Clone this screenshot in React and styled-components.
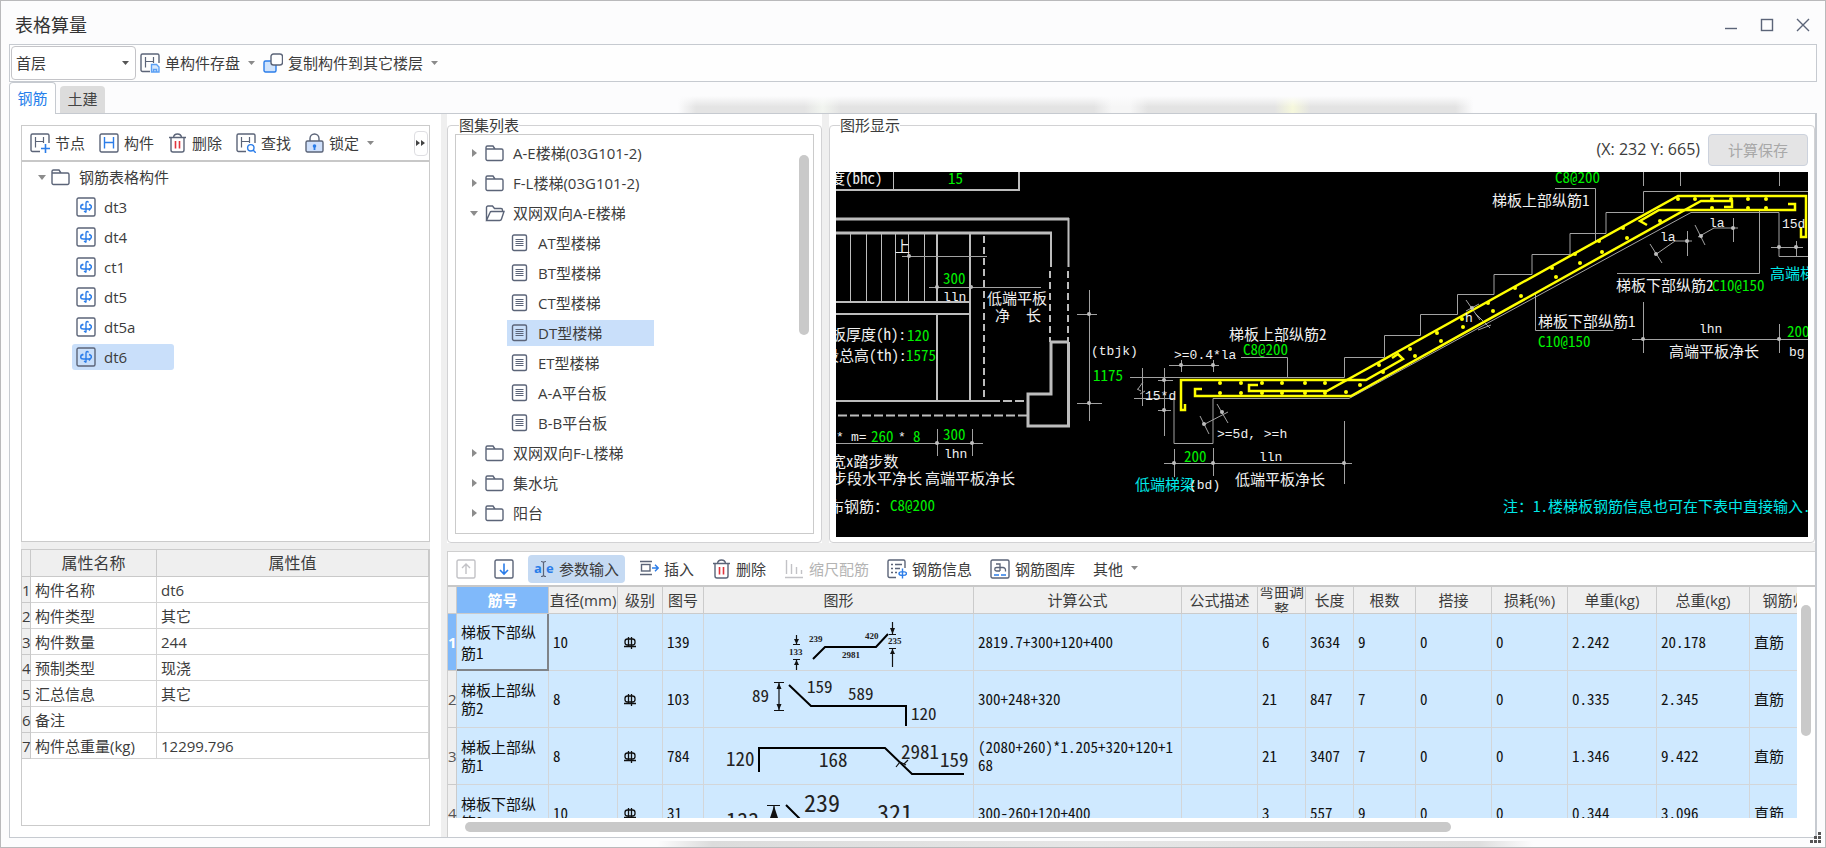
import React, { useState } from 'react'
import styled, { createGlobalStyle, css } from 'styled-components';

const GlobalStyle = createGlobalStyle`
    *{
        box-sizing:border-box;
    }
    body{
        margin:0;
        color:#3c3c3c;
        font:15px/20px "Open Sans","Noto Sans CJK SC",sans-serif;
    }
    button,select{
        font:inherit;
        color:inherit;
        background:none;
        border:0;
        padding:0;
        margin:0;
    }
`;

const Window = styled.div`
    position:relative;
    display:flex;
    flex-direction:column;
    height:100vh;
    min-height:640px;
    padding:0 8px 9px;
    border:1px solid #b9b9bb;
    overflow:hidden;
    background:
        linear-gradient(90deg, transparent 36%, #dcdcdc 39%, #e6e6e6 60%, #dedede 81%, transparent 84%) bottom / 100% 6px no-repeat,
        #fcfcfd;
`;

const TitleBar = styled.header`
    display:flex;
    align-items:center;
    justify-content:space-between;
    flex:0 0 43px;
    padding:4px 6px 0;
    h1{
        margin:0;
        font-size:18px;
        font-weight:400;
        color:#333;
    }
`;

const WindowButtons = styled.div`
    display:flex;
    gap:20px;
    button{
        display:flex;
    }
`;

const TopBar = styled.div`
    display:flex;
    align-items:center;
    flex:0 0 38px;
    padding:0 1px;
    background:#fefefe;
    border:1px solid #c6cad0;
`;

const FloorBox = styled.label`
    display:flex;
    align-items:center;
    width:125px;
    height:34px;
    padding:0 6px 0 4px;
    background:white;
    border:1px solid #c4c4c8;
    border-radius:4px;
    select{
        flex:1;
        appearance:none;
        outline:none;
    }
`;

const ToolButton = styled.button`
    display:flex;
    align-items:center;
    gap:5px;
    height:28px;
    padding:0 4px;
    white-space:nowrap;
    ${({ $active }) => $active && css`
        padding:0 6px;
        background:#c5daf3;
        border-radius:4px;
    `}
    &:disabled{
        color:#b4b4b4;
    }
    .caret{
        margin-left:3px;
    }
`;

const TabBar = styled.div`
    display:flex;
    align-items:flex-end;
    gap:4px;
    flex:0 0 31px;
    background:
        linear-gradient(#fcfcfd, #fcfcfd 45%, transparent 80%),
        linear-gradient(90deg,
            transparent 37%, #e4e4e4 38%, #e4e4e4 44%, #f2f5f0 45%, #e3e3e3 46%, #e3e3e3 60%,
            #f6f6f6 61%, #f6f6f6 62%, #e3e3e3 63%, #e3e3e3 70%, #f6f8dc 71%, #e3e3e3 72%, #e3e3e3 80%, transparent 81%
        );
`;

const Tab = styled.button`
    width:${({ $active }) => $active ? '47px' : '45px'};
    height:${({ $active }) => $active ? '32px' : '27px'};
    margin-bottom:${({ $active }) => $active ? '-1px' : '0'};
    padding-bottom:2px;
    background:${({ $active }) => $active ? 'white' : '#dcdcdc'};
    color:${({ $active }) => $active ? '#2680eb' : '#444'};
    border:${({ $active }) => $active ? '1px solid #c6cad0' : '0'};
    border-bottom:0;
    border-radius:4px 4px 0 0;
    z-index:1;
`;

const Body = styled.main`
    display:flex;
    gap:6px;
    flex:1;
    min-height:0;
    background:#efefef;
    border:1px solid #c6cad0;
    border-right-width:2px;
`;

const Side = styled.section`
    display:flex;
    flex-direction:column;
    flex:0 0 431px;
    padding:11px;
    background:white;
`;

const TreePanel = styled.div`
    flex:1;
    min-height:0;
    overflow:hidden;
    border:1px solid #cbcbcb;
`;

const SideTools = styled.div`
    display:flex;
    align-items:center;
    gap:6px;
    height:36px;
    padding:0 1px 0 4px;
    border-bottom:2px solid #c8c8c8;
    button:last-child{
        margin-left:auto;
    }
`;

const MoreButton = styled.button`
    display:flex;
    align-items:center;
    justify-content:center;
    width:14px;
    height:25px;
    border:1px solid #dedee2;
    border-radius:4px;
`;

const Tree = styled.ul`
    flex:1;
    margin:0;
    padding:0;
    list-style:none;
`;

const TreeRow = styled.li`
    display:flex;
    align-items:center;
    gap:${({ $gap }) => $gap || 0}px;
    height:30px;
    padding-left:${({ $indent }) => $indent}px;
`;

const TreeItem = styled.button`
    display:flex;
    align-items:center;
    gap:${({ $gap }) => $gap || 9}px;
    height:26px;
    padding:0 4px;
    text-align:left;
    white-space:nowrap;
    width:${({ $width }) => $width ? $width + 'px' : 'auto'};
    border-radius:${({ $round }) => $round ? '3px' : '0'};
    background:${({ $selected }) => $selected ? '#c9dffa' : 'none'};
`;

const PropPanel = styled.div`
    flex:0 0 277px;
    border:1px solid #cbcbcb;
`;

const Divider = styled.div`
    flex:0 0 7px;
    background:#efefef;
`;

const PropTable = styled.table`
    width:100%;
    border-spacing:0;
    table-layout:fixed;
    th,td{
        height:26px;
        padding:0 0 0 4px;
        text-align:left;
        font-weight:400;
        white-space:nowrap;
        border-right:1px solid #d4d4d4;
        border-bottom:1px solid #d4d4d4;
    }
    thead th{
        height:27px;
        padding:0;
        font-size:16px;
        text-align:center;
        background:#efefef;
        border-color:#c9c9c9;
    }
    tbody th{
        padding:0;
        background:#efefef;
        border-color:#c9c9c9;
    }
`;

const Work = styled.section`
    display:flex;
    flex-direction:column;
    gap:8px;
    flex:1;
    min-width:0;
`;

const Upper = styled.div`
    display:flex;
    gap:7px;
    flex:1;
    min-height:0;
`;

const GroupPane = styled.div`
    display:flex;
    flex:${({ $width }) => $width ? '0 0 ' + $width + 'px' : '1'};
    min-width:0;
    background:white;
`;

const Group = styled.fieldset`
    display:flex;
    flex-direction:column;
    flex:1;
    min-width:0;
    margin:2px 0 0;
    padding:${({ $pad }) => $pad};
    border:1px solid #d2d2d4;
    border-radius:4px;
    legend{
        margin-left:4px;
        padding:0;
        line-height:18px;
    }
`;

const ListBox = styled.div`
    display:flex;
    flex:1;
    min-height:0;
    overflow:hidden;
    padding:3px 4px 0 0;
    border:1px solid #cbcbcb;
`;

const Thumb = styled.div`
    flex:none;
    background:#c9c9c9;
    border-radius:5px;
    width:${({ $w }) => $w};
    height:${({ $h }) => $h};
    margin:${({ $m }) => $m};
`;

const ViewHead = styled.div`
    display:flex;
    align-items:flex-start;
    justify-content:flex-end;
    gap:8px;
    flex:0 0 38px;
    font-size:16px;
    line-height:30px;
`;

const SaveButton = styled.button`
    width:100px;
    height:32px;
    font-size:15px;
    color:#a8a8a8;
    background:#e4e4e5;
    border:1px solid #ccd2dd;
    border-radius:4px;
`;

const Canvas = styled.svg`
    display:block;
    flex:1;
    width:100%;
    min-height:0;
    background:black;
    font-family:"Noto Sans CJK SC",sans-serif;
    font-size:15px;
    font-feature-settings:"hwid";
    .mono{
        font-family:"Liberation Mono",monospace;
        font-size:13px;
    }
`;

const Lower = styled.div`
    display:flex;
    flex-direction:column;
    flex:0 0 286px;
    min-height:0;
    overflow:hidden;
    background:white;
    border:1px solid #cfcfcf;
    border-width:1px 0 0 1px;
`;

const GridTools = styled.div`
    display:flex;
    align-items:center;
    gap:10px;
    flex:0 0 35px;
    padding-left:4px;
    border-bottom:2px solid #c8c8c8;
`;

const GridBody = styled.div`
    display:flex;
    flex:1;
    min-height:0;
`;

const GridView = styled.div`
    flex:1;
    min-width:0;
    overflow:hidden;
`;

const RebarTable = styled.table`
    width:1388px;
    border-spacing:0;
    table-layout:fixed;
    color:#111;
    thead th{
        height:26px;
        padding:0;
        font-weight:400;
        color:#3c3c3c;
        background:#efefef;
        border-right:1px solid #cbcbcb;
        border-bottom:1px solid #cbcbcb;
    }
    thead th.current{
        color:white;
        font-weight:700;
        background:#80b9fa;
    }
    tbody th{
        padding:0;
        font-weight:400;
        color:#555;
        background:#efefef;
        border-right:1px solid #cbcbcb;
        border-bottom:1px solid #cbcbcb;
    }
    tbody th.current{
        color:white;
        font-weight:700;
        background:#80b9fa;
    }
    td{
        height:57px;
        padding:0 4px;
        line-height:18px;
        word-break:break-all;
        font-family:"Noto Sans CJK SC",sans-serif;
        font-feature-settings:"hwid";
        background:#cfe9ff;
        border-right:1px solid #d3d6d9;
        border-bottom:1px solid #d3d6d9;
    }
    td.shape{
        padding:0;
    }
    td.focus{
        line-height:21px;
        border-right:2px solid #808489;
        border-bottom:2px solid #808489;
    }
    svg{
        display:block;
    }
`;

const HeadText = styled.div`
    display:flex;
    align-items:center;
    justify-content:center;
    height:26px;
    overflow:hidden;
    line-height:18px;
    text-align:center;
    white-space:${({ $wrap }) => $wrap ? 'normal' : 'nowrap'};
`;

const ScrollRow = styled.div`
    flex:0 0 19px;
    padding:4px 0 0 17px;
`;

const Grip = styled.svg`
    position:absolute;
    right:3px;
    bottom:3px;
`;

const INK = '#5b6478';
const BLUE = '#2b7de9';

const Icon = ({ children, w = 20, h = 20 }) => (
    <svg width={w} height={h} viewBox={`0 0 ${w} ${h}`} fill="none" stroke={INK} strokeWidth="1.4" aria-hidden="true">
        {children}
    </svg>
)

const Caret = ({ color = '#8a8a8a' }) => (
    <svg className="caret" width="7" height="5" viewBox="0 0 7 5" aria-hidden="true"><path d="M0 0h7L3.500 4z" fill={color} /></svg>
)

const HFrame = 'M10 18.5H2.5a1.5 1.5 0 0 1-1.5-1.5V2.5A1.5 1.5 0 0 1 2.5 1h15A1.5 1.5 0 0 1 19 2.5V10';
const HMark = 'M5.5 4v10.5M5.5 8.5h8M13.5 4v6';

const icons = {
    save: <Icon><path d={HFrame} /><path d={HMark} strokeWidth="1.2" /><path d="M11.5 11.5h5l2.5 2.5v5h-7.5z" stroke="#5ba0f5" fill="#d6e8fd" /><path d="M13.5 19v-2.500h3V19" stroke="#5ba0f5" /></Icon>,
    copy: <Icon><rect x="1" y="8" width="12" height="11" rx="1.500" fill="#cfe3fc" stroke={BLUE} /><rect x="8" y="1" width="11.500" height="11" rx="2.500" fill="#fff" /></Icon>,
    node: <Icon><path d={HFrame} /><path d={HMark} strokeWidth="1.2" /><path d="M15.500 11v9M11 15.500h9" stroke={BLUE} strokeWidth="1.6" /></Icon>,
    part: <Icon><rect x="1" y="1" width="18" height="18" rx="1.500" /><path d="M5.500 4v11.500M14.500 4v11.500M5.500 9.500h9" stroke={BLUE} /></Icon>,
    find: <Icon><path d={HFrame} /><path d={HMark} strokeWidth="1.2" /><circle cx="14.800" cy="14.800" r="3.200" stroke={BLUE} /><path d="M17 17l2.800 2.800" stroke={BLUE} /></Icon>,
    trash: <Icon w={19}><path d="M1 4.500h17M5.500 4.500C5.800 2 7 1 9.500 1s3.700 1 4 3.500M3 4.500V17a2 2 0 0 0 2 2h9a2 2 0 0 0 2-2V4.500" /><path d="M7.500 8v7.500M11.500 8v7.500" stroke="#e0343c" strokeWidth="1.600" /></Icon>,
    lock: <Icon w={19}><path d="M5 8V5.500a4.500 4.500 0 0 1 9 0V8" /><rect x="1" y="8" width="17" height="11" rx="1.500" fill="#cfe0fb" /><path d="M9.500 14v3" stroke={BLUE} strokeWidth="1.800" /><circle cx="9.500" cy="13" r="1.800" fill={BLUE} stroke="none" /></Icon>,
    up: <Icon><g stroke="#c2c2c6"><rect x="1" y="1" width="18" height="18" rx="1.500" /><path d="M10 15V5.500M6 9l4-4 4 4" /></g></Icon>,
    down: <Icon><rect x="1" y="1" width="18" height="18" rx="1.500" /><path d="M10 4.500V14M6 11l4 4 4-4" stroke={BLUE} strokeWidth="1.600" /></Icon>,
    insert: <Icon><path d="M1 2.500h12M1 15.500h12" strokeWidth="1.600" /><rect x="2.500" y="5.500" width="8.500" height="6.500" /><path d="M13 9h6M16 5.800L19.200 9 16 12.200" stroke={BLUE} /></Icon>,
    scale: <Icon><g stroke="#c2c2c6"><path d="M2.500 1v14M7.500 5v10M12.500 8v7M17.500 11v4M1 18.500h18" /></g></Icon>,
    info: <Icon><path d="M9 18.500H2.500A1.500 1.500 0 0 1 1 17V2.500A1.500 1.500 0 0 1 2.500 1h14A1.500 1.500 0 0 1 18 2.500V9M4 5.500h2M8 5.500h7M4 9.500h2M8 9.500h5M4 13.500h2M8 13.500h2" /><path d="M15.500 9.500v10M12 14.500c0-2.500 7.500-2.500 7.500 0s-7.500 2.500-7.500 0z" stroke={BLUE} /></Icon>,
    library: <Icon><rect x="1" y="1" width="18" height="18" rx="1.500" /><path d="M6 5h4v7M10 8.500H6.500a1.700 1.700 0 0 0 0 3.500H10M10 8.500h3a2.500 2.500 0 0 1 2.500 2.500v1.500" strokeWidth="1.300" /><path d="M4 16h5M11 16h5" stroke={BLUE} strokeWidth="1.600" /></Icon>,
    comp: <Icon><rect x="1" y="1" width="18" height="18" rx="1.500" /><path d="M12.500 5.500c-.5-1.500-2.500-1.500-2.500.5v9.500M8 14l2 1.500M7.500 7.500C3.500 8.500 4 12 7.500 12h5c3.500 0 4-3.500.5-4.500M4.500 8.500L7 7M13 13.500l1.500-2" stroke={BLUE} /></Icon>,
    folder: <Icon w={19} h={17}><path d="M1 14V2.500A1.500 1.500 0 0 1 2.500 1H8l2 3h6.500A1.500 1.500 0 0 1 18 5.500V14a1.500 1.500 0 0 1-1.500 1.500h-14A1.500 1.500 0 0 1 1 14zM1 4h9" /></Icon>,
    open: <Icon w={20} h={17}><path d="M1.500 15V2.500A1.500 1.500 0 0 1 3 1h4.500l2 2.500H16A1.500 1.500 0 0 1 17.500 5v1.500M1.500 15.500L5 7.500A1.500 1.500 0 0 1 6.500 6.500H19L16.500 14a2 2 0 0 1-2 1.500z" /></Icon>,
    doc: <Icon w={17} h={18}><rect x="1.500" y="1" width="14" height="15.500" rx="1.500" /><path d="M4.500 5.500h8M4.500 7.500h8M4.500 9.500h8M4.500 11.500h8" strokeWidth="1" /></Icon>,
};

const ParamIcon = () => (
    <svg width="20" height="20" viewBox="0 0 20 20" aria-hidden="true">
        <text x="0" y="14" fontSize="13" fontWeight="700" fill={BLUE} fontFamily="Open Sans">a</text>
        <text x="12" y="14" fontSize="13" fontWeight="700" fill={BLUE} fontFamily="Open Sans">e</text>
        <path d="M7 2.500c1.500 0 2.500.5 2.500 1.500 0-1 1-1.500 2.500-1.500M9.500 4v12M7 17.500c1.500 0 2.500-.5 2.500-1.500 0 1 1 1.500 2.500 1.500" fill="none" stroke={INK} strokeWidth="1.200" />
    </svg>
)

const Arrow = ({ open }) => (
    <svg width="10" height="10" viewBox="0 0 10 10" aria-hidden="true">
        <path d={open ? 'M1 3h8L5 8z' : 'M3 1l5 4-5 4z'} fill="#8c8c8c" />
    </svg>
)

const components = ['dt3', 'dt4', 'ct1', 'dt5', 'dt5a', 'dt6'];

const atlas = [
    { name: 'A-E楼梯(03G101-2)' },
    { name: 'F-L楼梯(03G101-2)' },
    { name: '双网双向A-E楼梯', items: ['AT型楼梯', 'BT型楼梯', 'CT型楼梯', 'DT型楼梯', 'ET型楼梯', 'A-A平台板', 'B-B平台板'] },
    { name: '双网双向F-L楼梯' },
    { name: '集水坑' },
    { name: '阳台' },
];

const props = [
    ['构件名称', 'dt6'],
    ['构件类型', '其它'],
    ['构件数量', '244'],
    ['预制类型', '现浇'],
    ['汇总信息', '其它'],
    ['备注', ''],
    ['构件总重量(kg)', '12299.796'],
];

const columns = [
    ['筋号', 92], ['直径(mm)', 69], ['级别', 45], ['图号', 41], ['图形', 270], ['计算公式', 208], ['公式描述', 76],
    ['弯曲调整', 48], ['长度', 48], ['根数', 62], ['搭接', 76], ['损耗(%)', 76], ['单重(kg)', 89], ['总重(kg)', 93], ['钢筋归类', 86],
];

const Num = ({ x, y, size = 17, children }) => (
    <text x={x} y={y} fontSize={size} fill="#222">{children}</text>
)

const Tiny = ({ x, y, children }) => (
    <text x={x} y={y} fontSize="9" fontWeight="700" fontFamily="Liberation Serif" fill="#222">{children}</text>
)

const shapes = [
    <>
        <path d="M109 45l12-12h51l12-13" className="bar" />
        <path d="M92.500 21v9M89 30.500h7M89 45.500h7M92.500 46v10M188.500 8v12M185 20.500h7M185 34.500h7M188.500 35v18" className="dim" />
        <path d="M90 25h5l-2.500 5zM90 51h5l-2.500-5zM186 14h5l-2.500 6zM186 40h5l-2.500-5z" />
        <Tiny x={85} y={41}>133</Tiny>
        <Tiny x={105} y={28}>239</Tiny>
        <Tiny x={138} y={44}>2981</Tiny>
        <Tiny x={161} y={25}>420</Tiny>
        <Tiny x={184} y={30}>235</Tiny>
    </>,
    <>
        <path d="M85 14l22 21h95v20" className="bar" />
        <path d="M70 11.500h10M70 39.500h10M75 12v27" className="dim" />
        <path d="M72.500 18h5L75 12zM72.500 33h5L75 39z" />
        <Num x={48} y={31}>89</Num>
        <Num x={103} y={22}>159</Num>
        <Num x={144} y={29}>589</Num>
        <Num x={207} y={49}>120</Num>
    </>,
    <>
        <path d="M55 44V20h126l27 26h52" className="bar" />
        <path d="M192 39l4-5M196 34l6 3M200 36l4-4" className="dim" />
        <Num x={22} y={38} size={19}>120</Num>
        <Num x={115} y={39} size={19}>168</Num>
        <Num x={197} y={31} size={19}>2981</Num>
        <Num x={236} y={39} size={19}>159</Num>
    </>,
    <>
        <path d="M82 20l20 20h90" className="bar" />
        <path d="M63 20.500h13M70 21v36" className="dim" />
        <path d="M66 33h8l-4-12z" />
        <Num x={22} y={44} size={22}>133</Num>
        <Num x={100} y={27} size={24}>239</Num>
        <Num x={173} y={37} size={24}>321</Num>
    </>,
];

const rebars = [
    ['梯板下部纵筋1', '10', '139', '2819.7+300+120+400', '6', '3634', '9', '2.242', '20.178'],
    ['梯板上部纵筋2', '8', '103', '300+248+320', '21', '847', '7', '0.335', '2.345'],
    ['梯板上部纵筋1', '8', '784', '(2080+260)*1.205+320+120+168', '21', '3407', '7', '1.346', '9.422'],
    ['梯板下部纵筋2', '10', '31', '300-260+120+400', '3', '557', '9', '0.344', '3.096'],
];

const ShapeCell = styled.svg`
    fill:#111;
    .bar{
        fill:none;
        stroke:#000;
        stroke-width:2;
    }
    .dim{
        fill:none;
        stroke:#111;
        stroke-width:1.2;
    }
`;

const GradeMark = () => (
    <svg width="16" height="16" viewBox="0 0 16 16" fill="none" stroke="#111" strokeWidth="1.3" role="img" aria-label="HRB400">
        <rect x="3" y="5" width="10" height="6" rx="2.500" />
        <path d="M6.500 3v10M9.500 3v12M2 12.500h12" />
    </svg>
)

/* drawing labels: x, baseline, text, colour */
const WHITE = '#f0f0f0';
const GREEN = '#00f000';
const CYAN = '#00e8e8';

const labels = [
    [830, 184, '度(bhc)', WHITE],
    [948, 184, '15', GREEN],
    [895, 252, '上', WHITE],
    [943, 284, '300', GREEN],
    [987, 304, '低端平板', WHITE],
    [995, 321, '净', WHITE],
    [1026, 321, '长', WHITE],
    [831, 340, '板厚度(h):', WHITE],
    [907, 341, '120', GREEN],
    [824, 361, '段总高(th):', WHITE],
    [906, 361, '1575', GREEN],
    [1093, 381, '1175', GREEN],
    [871, 442, '260', GREEN],
    [913, 442, '8', GREEN],
    [943, 440, '300', GREEN],
    [831, 467, '宽x踏步数', WHITE],
    [832, 484, '步段水平净长', WHITE],
    [925, 484, '高端平板净长', WHITE],
    [829, 512, '布钢筋：', WHITE],
    [890, 511, 'C8@200', GREEN],
    [1229, 340, '梯板上部纵筋2', WHITE],
    [1243, 355, 'C8@200', GREEN],
    [1184, 462, '200', GREEN],
    [1135, 490, '低端梯梁', CYAN],
    [1235, 485, '低端平板净长', WHITE],
    [1492, 206, '梯板上部纵筋1', WHITE],
    [1555, 183, 'C8@200', GREEN],
    [1616, 291, '梯板下部纵筋2', WHITE],
    [1712, 291, 'C10@150', GREEN],
    [1770, 279, '高端梯梁', CYAN],
    [1538, 327, '梯板下部纵筋1', WHITE],
    [1538, 347, 'C10@150', GREEN],
    [1787, 337, '200', GREEN],
    [1669, 357, '高端平板净长', WHITE],
    [1503, 512, '注：1.楼梯板钢筋信息也可在下表中直接输入.', CYAN],
];

const latinLabels = [
    [943, 301, 'lln'],
    [1091, 355, '(tbjk)'],
    [836, 441, '*'],
    [851, 441, 'm='],
    [898, 441, '*'],
    [944, 458, 'lhn'],
    [1145, 400, '15*d'],
    [1174, 359, '>=0.4*la'],
    [1217, 438, '>=5d, >=h'],
    [1259, 461, 'lln'],
    [1189, 489, '(bd)'],
    [1465, 322, 'h'],
    [1660, 241, 'la'],
    [1709, 227, 'la'],
    [1782, 228, '15d'],
    [1699, 333, 'lhn'],
    [1789, 356, 'bg'],
];

const dots = [
    ...[1220, 1241, 1262, 1282, 1305, 1325].flatMap(x => [[x, 383], [x, 393]]),
    [1379, 365], [1410, 349], [1437, 333], [1462, 319], [1488, 303], [1515, 288], [1552, 268], [1575, 254], [1599, 241],
    [1623, 228], [1678, 199], [1346, 392], [1360, 385], [1383, 372], [1415, 356], [1441, 341], [1463, 327], [1493, 311],
    [1521, 296], [1556, 277], [1580, 263], [1602, 252], [1627, 238], [1660, 221], [1695, 199], [1712, 199], [1731, 199],
    [1748, 199], [1766, 199], [1712, 208], [1748, 208], [1766, 208],
];

const joints = [
    [909, 256], [937, 287], [971, 287], [1089, 314], [1089, 403], [937, 443], [972, 443], [1181, 365], [1213, 365],
    [1164, 380], [1164, 410], [1204, 424], [1222, 412], [1174, 463], [1213, 463], [1344, 463], [1656, 254], [1687, 241],
    [1701, 236], [1733, 228], [1779, 247], [1796, 247], [1643, 339], [1779, 339], [1472, 308],
];

function StairDrawing() {
    return (
        <Canvas role="img" aria-label="DT型楼梯配筋图">
            <g transform="translate(-836 -172)">
                <g fill="none" stroke="#bdbdbd">
                    <path strokeWidth="3" d="M836 219h233M836 233h216M1051 342h18M1051 342v52h-23v32h40.500V342" />
                    <path strokeWidth="2" d="M836 190h184M1019 172v18M1068.500 218v49M1051 232v35M836 302h134M836 314h134M937 234v68M937 314v87M970 234v167M836 401h155" />
                    <path strokeWidth="2" strokeDasharray="7 4" d="M1050 271v71M1068 271v71M984 236v165" />
                    <path strokeWidth="2" strokeDasharray="9 3" d="M991 401h37M838 415.500h190" />
                    <path d="M893.500 172v18M850.500 234v68M866.500 234v68M881.500 234v68M895.500 234v68M908.500 234v68M924.500 234v68" />
                </g>
                <g fill="none" stroke="#a2a2a2">
                    <path d="M902 256.500h85M929 287.500h112M1089.500 290v131M1077 314.500h20M1077 403.500h25M836 443.500h147M937.500 429v27M972.500 429v27" />
                    <path d="M1130 377.500h214.500v-20h40v-22h36v-21h37v-20h36.500v-20h38v-20h38v-21h36v-21h37.500v-21H1809" />
                    <path d="M1134 398.500h40v45h39v-45h136L1691 212.500h88v44h30" />
                    <path d="M1142.500 368v38M1164.500 368v68M1158 380.500h15M1158 410.500h13M1138 389l5-7M1137 389l4 2M1140 394l5-3M1169 365.500h50M1181.500 360v12M1213.500 360v12" />
                    <path d="M1241 357.500h46.500v20M1203 425l25-13M1200 416l9 18M1217 404l11 19M1164 463.500h188M1174.500 449v28M1213.500 448v28M1344.500 421v63" />
                    <path d="M1466 300l14 20M1466 311l13-7M1476 314l14 14M1478 330l13-5" />
                    <path d="M1555 188.500h40.500v53M1643.500 172v14M1680.500 172v14M1779.500 172v14" />
                    <path d="M1655 255l20-14h17M1687.500 231v25M1650 244l12 19M1698 237l16-9h24M1733.500 218v24M1695 225l10 20M1771 247.500h32M1796.500 241v16" />
                    <path d="M1759.500 210v63.500H1617M1535.500 294v36.500h78M1643.500 302v51M1632 339.500h177M1779.500 324v29" />
                </g>
                <g fill="none" stroke="#ffff00" strokeWidth="2.500">
                    <path d="M1185 404v6h-4v-30h185l37-21-5-5-6 4" />
                    <path d="M1202 389h-7v7h156L1701 201h31v6h-8" />
                    <path d="M1258 385h-9v6h78L1678 196h128v41h-5v-10" />
                    <path d="M1647 225l-7-4 19-11h136v-6h-7" />
                </g>
                <g fill="#ffff00">
                    {dots.map(([x, y]) => <circle key={`${x}-${y}`} cx={x} cy={y} r="2" />)}
                </g>
                <g fill="#bdbdbd">
                    {joints.map(([x, y]) => <circle key={`${x}-${y}`} cx={x} cy={y} r="2" />)}
                </g>
                {labels.map(([x, y, text, color]) => <text key={`${x}-${y}`} x={x} y={y} fill={color}>{text}</text>)}
                {latinLabels.map(([x, y, text]) => <text key={`${x}-${y}`} className="mono" x={x} y={y} fill={WHITE}>{text}</text>)}
            </g>
        </Canvas>
    )
}

function ComponentTree() {
    const [selected, setSelected] = useState('dt6');
    return (
        <Tree>
            <TreeRow $indent={15}>
                <Arrow open />
                <TreeItem>{icons.folder}钢筋表格构件</TreeItem>
            </TreeRow>
            {components.map(name => (
                <TreeRow key={name} $indent={50}>
                    <TreeItem $width={102} $gap={8} $round $selected={name === selected} onClick={() => setSelected(name)}>
                        {icons.comp}{name}
                    </TreeItem>
                </TreeRow>
            ))}
        </Tree>
    )
}

function AtlasTree() {
    const [selected, setSelected] = useState('DT型楼梯');
    return (
        <Tree>
            {atlas.map(group => (
                <React.Fragment key={group.name}>
                    <TreeRow $indent={13} $gap={2}>
                        <Arrow open={!!group.items} />
                        <TreeItem $gap={group.items ? 8 : 9}>{group.items ? icons.open : icons.folder}{group.name}</TreeItem>
                    </TreeRow>
                    {group.items && group.items.map(name => (
                        <TreeRow key={name} $indent={51}>
                            <TreeItem $width={147} $gap={10} $selected={name === selected} onClick={() => setSelected(name)}>
                                {icons.doc}{name}
                            </TreeItem>
                        </TreeRow>
                    ))}
                </React.Fragment>
            ))}
        </Tree>
    )
}

function RebarGrid() {
    return (
        <RebarTable>
            <colgroup>
                <col style={{ width: 9 }} />
                {columns.map(([name, width]) => <col key={name} style={{ width }} />)}
            </colgroup>
            <thead>
                <tr>
                    <th></th>
                    {columns.map(([name], i) => (
                        <th key={name} className={i === 0 ? 'current' : ''}><HeadText $wrap={name === '弯曲调整'}>{name}</HeadText></th>
                    ))}
                </tr>
            </thead>
            <tbody>
                {rebars.map(([name, dia, no, formula, bend, len, count, unit, total], i) => (
                    <tr key={name}>
                        <th className={i === 0 ? 'current' : ''}>{i + 1}</th>
                        <td className={i === 0 ? 'focus' : ''}>{name}</td>
                        <td>{dia}</td>
                        <td><GradeMark /></td>
                        <td>{no}</td>
                        <td className="shape"><ShapeCell width="269" height="56">{shapes[i]}</ShapeCell></td>
                        <td>{formula}</td>
                        <td></td>
                        <td>{bend}</td>
                        <td>{len}</td>
                        <td>{count}</td>
                        <td>0</td>
                        <td>0</td>
                        <td>{unit}</td>
                        <td>{total}</td>
                        <td>直筋</td>
                    </tr>
                ))}
            </tbody>
        </RebarTable>
    )
}

export default function App() {
    const [tab, setTab] = useState('钢筋');
    return (
        <Window>
            <GlobalStyle />
            <TitleBar>
                <h1>表格算量</h1>
                <WindowButtons>
                    <button aria-label="最小化"><Icon w={16} h={16}><path d="M2 11.500h12" /></Icon></button>
                    <button aria-label="最大化"><Icon w={16} h={16}><rect x="2.500" y="2.500" width="11" height="11" /></Icon></button>
                    <button aria-label="关闭"><Icon w={16} h={16}><path d="M2 2l12 12M14 2L2 14" /></Icon></button>
                </WindowButtons>
            </TitleBar>
            <TopBar>
                <FloorBox>
                    <select aria-label="楼层" defaultValue="首层">
                        <option>首层</option>
                    </select>
                    <Caret color="#555" />
                </FloorBox>
                <ToolButton>{icons.save}单构件存盘<Caret /></ToolButton>
                <ToolButton>{icons.copy}复制构件到其它楼层<Caret /></ToolButton>
            </TopBar>
            <TabBar>
                {['钢筋', '土建'].map(name => (
                    <Tab key={name} $active={name === tab} onClick={() => setTab(name)}>{name}</Tab>
                ))}
            </TabBar>
            <Body>
                <Side>
                    <TreePanel>
                        <SideTools>
                            <ToolButton>{icons.node}节点</ToolButton>
                            <ToolButton>{icons.part}构件</ToolButton>
                            <ToolButton>{icons.trash}删除</ToolButton>
                            <ToolButton>{icons.find}查找</ToolButton>
                            <ToolButton>{icons.lock}锁定<Caret /></ToolButton>
                            <MoreButton aria-label="更多">
                                <svg width="10" height="8" viewBox="0 0 10 8"><path d="M0 1l4 3-4 3zM5 1l4 3-4 3z" fill="#444" /></svg>
                            </MoreButton>
                        </SideTools>
                        <ComponentTree />
                    </TreePanel>
                    <Divider />
                    <PropPanel>
                        <PropTable>
                            <colgroup>
                                <col style={{ width: 9 }} />
                                <col style={{ width: 126 }} />
                                <col />
                            </colgroup>
                            <thead>
                                <tr><th></th><th>属性名称</th><th>属性值</th></tr>
                            </thead>
                            <tbody>
                                {props.map(([name, value], i) => (
                                    <tr key={name}><th>{i + 1}</th><td>{name}</td><td>{value}</td></tr>
                                ))}
                            </tbody>
                        </PropTable>
                    </PropPanel>
                </Side>
                <Work>
                    <Upper>
                        <GroupPane $width={375}>
                            <Group $pad="0 7px 8px">
                                <legend>图集列表</legend>
                                <ListBox>
                                    <AtlasTree />
                                    <Thumb $w="10px" $h="180px" $m="17px 0 0" />
                                </ListBox>
                            </Group>
                        </GroupPane>
                        <GroupPane>
                            <Group $pad="0 6px 5px">
                                <legend>图形显示</legend>
                                <ViewHead>
                                    <span>(X: 232 Y: 665)</span>
                                    <SaveButton disabled>计算保存</SaveButton>
                                </ViewHead>
                                <StairDrawing />
                            </Group>
                        </GroupPane>
                    </Upper>
                    <Lower>
                        <GridTools>
                            <ToolButton disabled aria-label="上移">{icons.up}</ToolButton>
                            <ToolButton aria-label="下移">{icons.down}</ToolButton>
                            <ToolButton $active><ParamIcon />参数输入</ToolButton>
                            <ToolButton>{icons.insert}插入</ToolButton>
                            <ToolButton>{icons.trash}删除</ToolButton>
                            <ToolButton disabled>{icons.scale}缩尺配筋</ToolButton>
                            <ToolButton>{icons.info}钢筋信息</ToolButton>
                            <ToolButton>{icons.library}钢筋图库</ToolButton>
                            <ToolButton>其他<Caret /></ToolButton>
                        </GridTools>
                        <GridBody>
                            <GridView><RebarGrid /></GridView>
                            <Thumb $w="10px" $h="131px" $m="18px 4px 0" />
                        </GridBody>
                        <ScrollRow><Thumb $w="73%" $h="10px" $m="0" /></ScrollRow>
                    </Lower>
                </Work>
            </Body>
            <Grip width="12" height="12" viewBox="0 0 12 12" fill="#555" aria-hidden="true">
                <path d="M8 0h3v3H8zM8 4h3v3H8zM8 8h3v3H8zM4 4h3v3H4zM4 8h3v3H4zM0 8h3v3H0z" />
            </Grip>
        </Window>
    )
}
